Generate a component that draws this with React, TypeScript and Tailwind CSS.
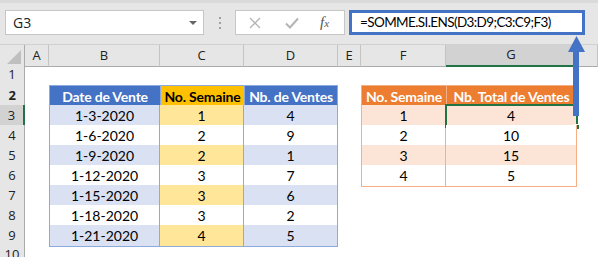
const cols = "grid-cols-[25px_24px_111px_84px_94px_23px_85px_131px_1fr]";

const sales = [
  { date: "1-3-2020", week: "1", n: "4" },
  { date: "1-6-2020", week: "2", n: "9" },
  { date: "1-9-2020", week: "2", n: "1" },
  { date: "1-12-2020", week: "3", n: "7" },
  { date: "1-15-2020", week: "3", n: "6" },
  { date: "1-18-2020", week: "3", n: "2" },
  { date: "1-21-2020", week: "4", n: "5" },
];

const totals = [
  { week: "1", total: "4" },
  { week: "2", total: "10" },
  { week: "3", total: "15" },
  { week: "4", total: "5" },
];

const RowHead = ({ n, active }: { n: number; active?: boolean }) => (
  <div
    className={
      "flex items-center justify-center border-b border-[#d4d4d4] text-[13px] text-[#222] font-['Open_Sans',sans-serif] " +
      (active
        ? "bg-[#d2d2d2] border-r-2 border-r-[#217346]"
        : "bg-[#e6e6e6] border-r border-r-[#ababab]")
    }
  >
    {n}
  </div>
);

const ColHead = ({ label, active }: { label: string; active?: boolean }) => (
  <div
    className={
      "flex items-center justify-center text-[13px] text-[#222] font-['Open_Sans',sans-serif] border-r border-[#c4c4c4] " +
      (active ? "bg-[#d2d2d2] border-b-2 border-b-[#217346]" : "bg-[#e6e6e6] border-b border-b-[#ababab]")
    }
  >
    {label}
  </div>
);

const Empty = () => <div />;

export default function App() {
  return (
    <div className="relative w-[598px] h-[257px] overflow-hidden bg-white font-['Lato','Open_Sans',sans-serif]">
      {/* Formula bar */}
      <div className="h-[45px] bg-[#e6e6e6] border-t-[3px] border-[#dadada] border-b border-b-[#d0d0d0] flex items-start pt-[7px]">
        <div className="ml-[5px] w-[199px] h-[25px] bg-white border border-[#c6c6c6] flex items-center justify-between pl-[7px] pr-[6px]">
          <span className="text-[14px] text-[#222] font-['Open_Sans',sans-serif]">G3</span>
          <span className="w-0 h-0 border-l-[4px] border-r-[4px] border-t-[4px] border-l-transparent border-r-transparent border-t-[#666]" />
        </div>
        <div className="w-[31px] h-[25px] flex flex-col items-center justify-center gap-[3px]">
          <span className="w-[2px] h-[2px] bg-[#a0a0a0]" />
          <span className="w-[2px] h-[2px] bg-[#a0a0a0]" />
          <span className="w-[2px] h-[2px] bg-[#a0a0a0]" />
        </div>
        <div className="w-[110px] h-[25px] bg-white border border-[#c6c6c6] flex items-center pl-[12px]">
          <svg width="12" height="12" viewBox="0 0 12 12" className="ml-[1px]">
            <path d="M1 1L11 11M11 1L1 11" stroke="#b4b4b4" strokeWidth="1.3" fill="none" />
          </svg>
          <svg width="14" height="12" viewBox="0 0 14 12" className="ml-[24px]">
            <path d="M1 6.5L5 10.5L13 1.5" stroke="#b4b4b4" strokeWidth="2" fill="none" />
          </svg>
          <span className="ml-[21px] text-[15px] italic text-[#555] font-['Liberation_Serif',serif]">
            f<span className="text-[11px]">x</span>
          </span>
        </div>
        <div className="ml-[4px] w-[236px] h-[25px] bg-white border-[3px] border-[#4472c4] flex items-center pl-[8px]">
          <span className="text-[13.5px] tracking-[-0.6px] text-black whitespace-nowrap">=SOMME.SI.ENS(D3:D9;C3:C9;F3)</span>
        </div>
      </div>

      {/* Column headers */}
      <div className={"grid h-[20px] " + cols}>
        <div className="bg-[#e6e6e6] border-r border-b border-[#ababab] flex items-end justify-end pr-[3px] pb-[2px]">
          <svg width="14" height="14" viewBox="0 0 14 14">
            <polygon points="14,0 14,14 0,14" fill="#bfbfbf" />
          </svg>
        </div>
        <ColHead label="A" />
        <ColHead label="B" />
        <ColHead label="C" />
        <ColHead label="D" />
        <ColHead label="E" />
        <ColHead label="F" />
        <ColHead label="G" active />
        <ColHead label="" />
      </div>

      {/* Row 1 */}
      <div className={"grid h-[20px] " + cols}>
        <RowHead n={1} />
      </div>

      {/* Row 2: headers */}
      <div className={"grid h-[20px] text-[14px] tracking-[-0.2px] font-bold whitespace-nowrap " + cols}>
        <RowHead n={2} />
        <Empty />
        <div className="bg-[#4472c4] text-white flex items-center justify-center border border-[#8ea9db] border-r-0">
          Date de Vente
        </div>
        <div className="bg-[#ffc000] text-black flex items-center justify-center border border-[#8ea9db] border-r-0">
          No. Semaine
        </div>
        <div className="bg-[#4472c4] text-white flex items-center justify-center border border-[#8ea9db]">
          Nb. de Ventes
        </div>
        <Empty />
        <div className="bg-[#ed7d31] text-white flex items-center justify-center border border-[#f4b084] border-r-0">
          No. Semaine
        </div>
        <div className="bg-[#ed7d31] text-white flex items-center justify-center border border-[#f4b084]">
          Nb. Total de Ventes
        </div>
      </div>

      {/* Rows 3..9 */}
      {sales.map((r, i) => {
        const odd = i % 2 === 0;
        const t = totals[i];
        return (
          <div key={r.date} className={"grid h-[20px] text-[14px] text-black " + cols}>
            <RowHead n={i + 3} active={i === 0} />
            <Empty />
            <div
              className={
                "flex items-center justify-center border-l border-r border-b border-[#8ea9db] " +
                (odd ? "bg-[#d9e1f2]" : "bg-white")
              }
            >
              {r.date}
            </div>
            <div
              className={
                "flex items-center justify-center border-r border-b border-[#8ea9db] " +
                (odd ? "bg-[#ffe699]" : "bg-white")
              }
            >
              {r.week}
            </div>
            <div
              className={
                "flex items-center justify-center border-r border-b border-[#8ea9db] " +
                (odd ? "bg-[#d9e1f2]" : "bg-white")
              }
            >
              {r.n}
            </div>
            <Empty />
            {t ? (
              <>
                <div
                  className={
                    "flex items-center justify-center border-l border-r border-b border-[#f4b084] " +
                    (odd ? "bg-[#fce4d6]" : "bg-white")
                  }
                >
                  {t.week}
                </div>
                <div
                  className={
                    "relative flex items-center justify-center border-r border-b border-[#f4b084] " +
                    (odd ? "bg-[#fce4d6]" : "bg-white")
                  }
                >
                  {t.total}
                  {i === 0 && (
                    <>
                      <div className="absolute left-[-1px] top-[-1px] right-[-2px] bottom-[-2px] border-2 border-[#217346]" />
                      <div className="absolute right-[-4px] bottom-[-4px] w-[6px] h-[6px] bg-[#217346] border border-white" />
                    </>
                  )}
                </div>
              </>
            ) : (
              <>
                <Empty />
                <Empty />
              </>
            )}
          </div>
        );
      })}

      {/* Row 10 */}
      <div className={"grid h-[20px] " + cols}>
        <RowHead n={10} />
      </div>

      {/* Arrow from G3 to the formula */}
      <svg className="absolute left-0 top-0 pointer-events-none" width="598" height="257">
        <rect x="573" y="50" width="6" height="66" fill="#4472c4" />
        <polygon points="568,52 585,52 576.5,36" fill="#4472c4" />
      </svg>
    </div>
  );
}
